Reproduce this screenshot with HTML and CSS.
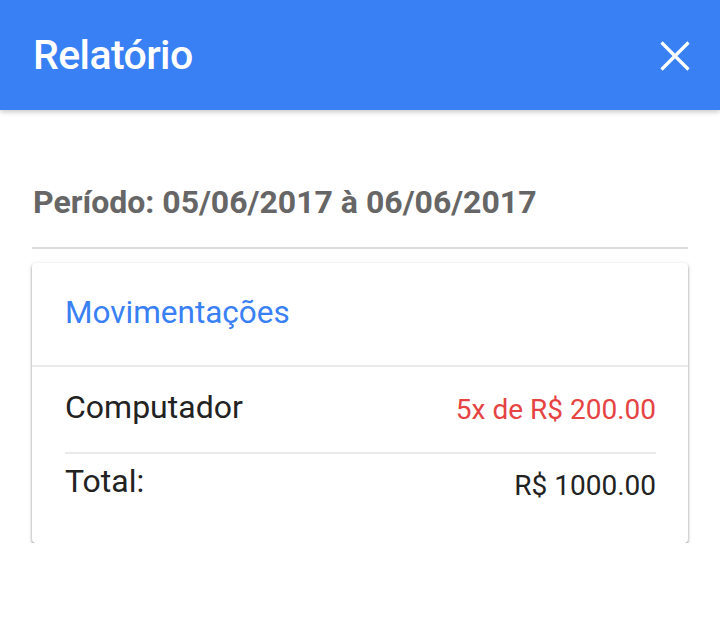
FILE: index.html
```html
<!DOCTYPE html>
<html lang="pt-BR">
<head>
<meta charset="utf-8">
<title>Relatório</title>
<link rel="stylesheet" href="styles.css">
</head>
<body>
<header class="toolbar">
  <h1 class="title">Relatório</h1>
  <button class="close" aria-label="Fechar">
    <svg width="30" height="30" viewBox="0 0 30 30"><path d="M1.5 1.5 L28.5 28.5 M28.5 1.5 L1.5 28.5" stroke="#fff" stroke-width="3.2" fill="none"/></svg>
  </button>
</header>
<main class="content">
  <h2 class="period">Período: 05/06/2017 à 06/06/2017</h2>
  <hr class="divider">
  <section class="card">
    <div class="card-header">Movimentações</div>
    <div class="card-body">
      <div class="row item">
        <span class="label">Computador</span>
        <span class="value debit">5x de R$ 200.00</span>
      </div>
      <div class="row total">
        <span class="label">Total:</span>
        <span class="value">R$ 1000.00</span>
      </div>
    </div>
  </section>
</main>
</body>
</html>
```
FILE: styles.css
```css
* { box-sizing: border-box; }
html, body { margin: 0; padding: 0; background: #fff; }
body { font-family: Roboto, "Noto Sans", sans-serif; color: #222; }

.toolbar {
  height: 110px;
  background: #3880f4;
  display: flex;
  align-items: center;
  justify-content: space-between;
  padding: 0 30px 0 33px;
  box-shadow: 0 2px 5px rgba(0,0,0,0.22);
  position: relative;
}
.title {
  margin: 0;
  color: #fff;
  font-size: 41px;
  line-height: 48px;
  font-weight: 500;
  letter-spacing: -0.6px;
}
.close {
  background: none;
  border: 0;
  padding: 0;
  width: 30px;
  height: 30px;
  display: flex;
  margin-top: 2px;
}

.content { padding: 0 32px; }
.period {
  margin: 0;
  padding: 73px 1px 0;
  font-size: 32px;
  font-weight: 700;
  color: #666;
  line-height: 38px;
}
.divider {
  border: 0;
  height: 2px;
  background: #ddd;
  margin: 26px 0 14px;
}
.card {
  border-radius: 4px;
  background: #fff;
  box-shadow: 0 2px 3px rgba(0,0,0,0.4), 0 0 4px rgba(0,0,0,0.08);
}
.card-header {
  color: #3880f4;
  font-size: 31.5px;
  line-height: 38px;
  padding: 31px 33px 33px;
  border-bottom: 2px solid #eaeaea;
}
.card-body { padding: 0 32px 38px 33px; }
.row {
  display: flex;
  justify-content: space-between;
  align-items: flex-start;
  font-size: 32px;
  line-height: 38px;
}
.value { font-size: 28px; line-height: 38px; }
.item {
  padding: 21px 0 23px;
  border-bottom: 2px solid #eaeaea;
}
.item .value { padding-top: 3px; }
.total { padding-top: 8px; }
.total .value { padding-top: 5px; }
.debit { color: #e64343; }
```
